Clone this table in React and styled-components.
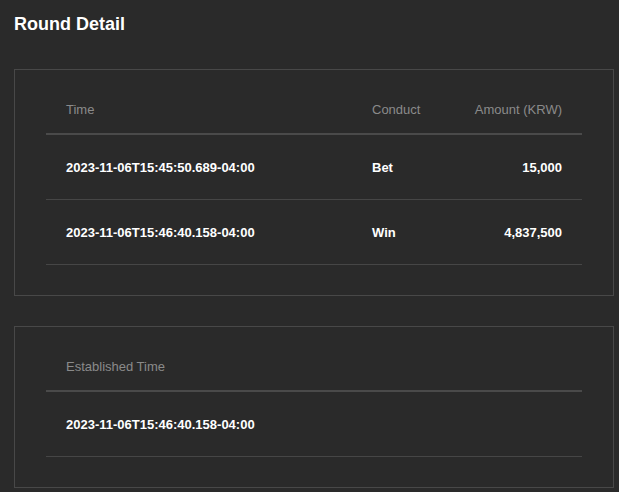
import React from 'react';
import styled, { createGlobalStyle } from 'styled-components';

const GlobalStyle = createGlobalStyle`
  html, body {
    margin: 0;
    padding: 0;
    background: #2a2a2a;
  }
  body {
    font-family: "Liberation Sans", Arial, sans-serif;
    color: #fff;
  }
`;

const Page = styled.div`
  padding: 14px 5px 0 14px;
  min-height: 492px;
  box-sizing: border-box;
  background: #2a2a2a;
`;

const Title = styled.h1`
  margin: 0 0 34px;
  font-size: 18px;
  line-height: 21px;
  font-weight: 700;
  color: #fff;
`;

const Card = styled.section`
  border: 1px solid #484848;
  padding: 16px 31px 30px;
  margin-bottom: 30px;
`;

const Grid = styled.div`
  display: grid;
  grid-template-columns: ${(p) => p.$cols};
`;

const HeadCell = styled.div`
  padding: 15px 20px 15px;
  font-size: 13px;
  line-height: 17px;
  color: #8a8a8a;
  border-bottom: 2px solid #4a4a4a;
  text-align: ${(p) => (p.$right ? 'right' : 'left')};
  white-space: nowrap;
`;

const Cell = styled.div`
  padding: 24px 20px 23px;
  font-size: 13px;
  line-height: 17px;
  font-weight: 700;
  color: #fff;
  border-bottom: 1px solid #464646;
  text-align: ${(p) => (p.$right ? 'right' : 'left')};
  white-space: nowrap;
`;

const rounds = [
  { time: '2023-11-06T15:45:50.689-04:00', conduct: 'Bet', amount: '15,000' },
  { time: '2023-11-06T15:46:40.158-04:00', conduct: 'Win', amount: '4,837,500' },
];

export default function App() {
  return (
    <>
      <GlobalStyle />
      <Page>
        <Title>Round Detail</Title>

        <Card>
          <Grid $cols="1fr 89px 141px">
            <HeadCell>Time</HeadCell>
            <HeadCell>Conduct</HeadCell>
            <HeadCell $right>Amount (KRW)</HeadCell>
            {rounds.map((r) => (
              <React.Fragment key={r.time}>
                <Cell>{r.time}</Cell>
                <Cell>{r.conduct}</Cell>
                <Cell $right>{r.amount}</Cell>
              </React.Fragment>
            ))}
          </Grid>
        </Card>

        <Card>
          <Grid $cols="1fr">
            <HeadCell>Established Time</HeadCell>
            <Cell>2023-11-06T15:46:40.158-04:00</Cell>
          </Grid>
        </Card>
      </Page>
    </>
  );
}
